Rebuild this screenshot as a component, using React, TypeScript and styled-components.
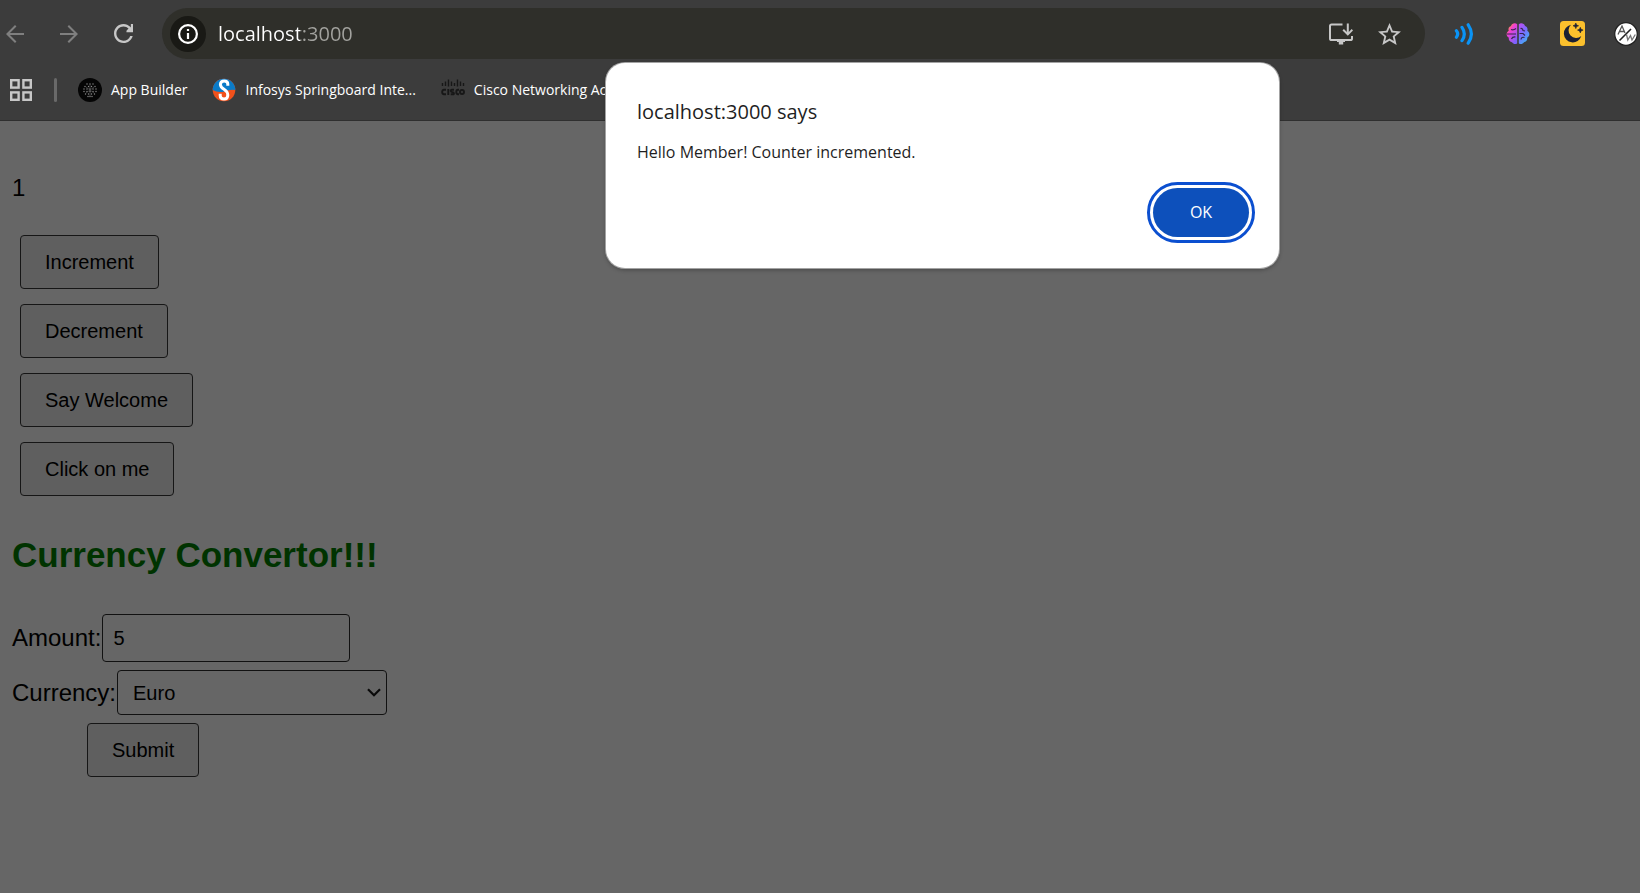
import React, { useState } from "react";
import styled, { createGlobalStyle } from "styled-components";

const uiFont = `"Open Sans", "Noto Sans", sans-serif`;
const pageFont = `"Liberation Sans", Arial, sans-serif`;

const GlobalStyle = createGlobalStyle`
  *, *::before, *::after { box-sizing: border-box; }
  body { margin: 0; background: #666666; }
`;

const Window = styled.div`
  position: relative;
  min-height: 100vh;
  overflow-x: hidden;
  background: #666666;
`;

const BrowserChrome = styled.header`
  background: #3c3c3c;
  border-bottom: 1px solid #2f2f2f;
  padding-top: 8px;
  font-family: ${uiFont};
`;

const Toolbar = styled.div`
  display: flex;
  align-items: center;
  height: 51px;
  padding: 0 2px 0 6px;
`;

const NavGroup = styled.nav`
  display: flex;
  gap: 36px;
  margin-right: 30px;
`;

const IconButton = styled.button<{ $size: number; $tone?: string }>`
  display: flex;
  align-items: center;
  justify-content: center;
  width: ${(p) => p.$size}px;
  height: 24px;
  padding: 0;
  border: 0;
  background: none;
  color: ${(p) => p.$tone ?? "#c7c7c7"};
  svg { display: block; flex: none; }
`;

const AddressBar = styled.form`
  flex: 1;
  min-width: 0;
  display: flex;
  align-items: center;
  height: 51px;
  padding: 0 24px 0 8px;
  border-radius: 26px;
  background: #2f2f2a;
`;

const SiteInfo = styled.button`
  display: flex;
  align-items: center;
  justify-content: center;
  flex: none;
  width: 36px;
  height: 36px;
  padding: 0;
  border: 0;
  border-radius: 50%;
  background: #191915;
  color: #ffffff;
`;

const UrlInput = styled.input`
  flex: 1;
  min-width: 0;
  height: 32px;
  margin-left: 12px;
  padding: 0;
  border: 0;
  outline: 0;
  font: 20px/32px ${uiFont};
  color: transparent;
  background: linear-gradient(to right, #ffffff 82px, #a3a39f 82px);
  background-clip: text;
  -webkit-background-clip: text;
`;

const BarActions = styled.div`
  display: flex;
  gap: 24px;
`;

const Extensions = styled.div`
  display: flex;
  gap: 30px;
  margin-left: 27px;
`;

const BookmarksBar = styled.div`
  display: flex;
  align-items: center;
  height: 61px;
  padding: 0 10px;
`;

const Divider = styled.span`
  width: 3px;
  height: 24px;
  margin: 0 21px 0 22px;
  border-radius: 2px;
  background: #696969;
`;

const Bookmark = styled.a`
  display: flex;
  align-items: center;
  gap: 9px;
  margin-right: 25px;
  color: #ffffff;
  font-size: 14px;
  line-height: 20px;
  text-decoration: none;
  white-space: nowrap;
`;

const Page = styled.main`
  padding: 53px 12px 24px;
  font-family: ${pageFont};
  color: #000000;
`;

const Count = styled.p`
  margin: 0 0 33px;
  font-size: 24px;
  line-height: 28px;
`;

const ButtonStack = styled.div`
  display: flex;
  flex-direction: column;
  align-items: flex-start;
  gap: 15px;
  padding-left: 8px;
`;

const PageButton = styled.button`
  height: 54px;
  padding: 0 24px;
  border: 1px solid #161616;
  border-radius: 4px;
  background: #5f5f5f;
  font: 20px/24px ${pageFont};
  color: #000000;
`;

const Heading = styled.h2`
  margin: 39px 0;
  font-size: 35px;
  line-height: 40px;
  color: #003300;
`;

const ConverterForm = styled.form`
  display: flex;
  flex-direction: column;
  align-items: flex-start;
  gap: 8px;
`;

const Field = styled.div`
  display: flex;
  align-items: center;
  gap: 1px;
`;

const FieldLabel = styled.label`
  font-size: 24px;
  line-height: 28px;
`;

const AmountInput = styled.input`
  width: 248px;
  height: 48px;
  padding: 0 10px;
  border: 1px solid #111111;
  border-radius: 4px;
  background: #666666;
  font: 20px/24px ${pageFont};
  color: #000000;
`;

const SelectWrap = styled.div`
  display: grid;
  align-items: center;
  > * { grid-area: 1 / 1; }
  > svg { justify-self: end; margin-right: 6px; pointer-events: none; }
`;

const CurrencySelect = styled.select`
  appearance: none;
  width: 270px;
  height: 45px;
  padding: 0 15px;
  border: 1px solid #111111;
  border-radius: 4px;
  background: #666666;
  font: 20px/24px ${pageFont};
  color: #000000;
`;

const SubmitRow = styled.div`
  padding-left: 75px;
`;

const Dialog = styled.div`
  position: absolute;
  top: 63px;
  left: 606px;
  width: 673px;
  height: 205px;
  display: flex;
  flex-direction: column;
  padding: 35px 30px 31px 31px;
  border-radius: 19px;
  background: #ffffff;
  box-shadow: 0 0 0 1px #a3a3a3, 0 2px 4px rgba(0, 0, 0, 0.3);
  font-family: ${uiFont};
  color: #1f1f1f;
`;

const DialogTitle = styled.h1`
  margin: 0;
  font-size: 20px;
  font-weight: 500;
  line-height: 28px;
`;

const DialogText = styled.p`
  margin: 14px 0 0;
  font-size: 16px;
  line-height: 24px;
`;

const OkButton = styled.button`
  align-self: flex-end;
  width: 96px;
  height: 49px;
  margin-top: auto;
  padding: 0 0 2px;
  border: 0;
  border-radius: 25px;
  outline: 3px solid #0b4fd0;
  outline-offset: 3px;
  background: #0d50bb;
  font: 500 16px/20px ${uiFont};
  color: #ffffff;
`;

const BackIcon = () => (
  <svg width="18" height="18" viewBox="4 4 16 16" fill="currentColor">
    <path d="M20 11.1H7.5l5.8-5.8L12 4l-8 8 8 8 1.3-1.3-5.8-5.8H20z" />
  </svg>
);

const ForwardIcon = () => (
  <svg width="18" height="18" viewBox="4 4 16 16" fill="currentColor">
    <path d="M4 11.1h12.5l-5.8-5.8L12 4l8 8-8 8-1.3-1.3 5.8-5.8H4z" />
  </svg>
);

const ReloadIcon = () => (
  <svg width="19" height="19" viewBox="4 4 16 16" fill="currentColor">
    <path d="M17.65 6.35C16.2 4.9 14.21 4 12 4c-4.42 0-7.99 3.58-7.99 8s3.57 8 7.99 8c3.73 0 6.84-2.55 7.73-6h-2.08c-.82 2.33-3.04 4-5.65 4-3.31 0-6-2.69-6-6s2.69-6 6-6c1.66 0 3.14.69 4.22 1.78L14.5 9.6V11H20V4h-1.8v2.9z" />
  </svg>
);

const InfoIcon = () => (
  <svg width="20" height="20" viewBox="0 0 20 20" fill="none" stroke="currentColor">
    <circle cx="10" cy="10" r="8.9" strokeWidth="2.2" />
    <path d="M10 9v6M10 5v2" strokeWidth="2.2" />
  </svg>
);

const InstallIcon = () => (
  <svg width="24" height="22" viewBox="0 0 24 22" fill="none" stroke="currentColor" strokeWidth="2">
    <path d="M13.5 1.5H2.6Q1 1.5 1 3.1v12.3Q1 17 2.6 17h18.8q1.6 0 1.6-1.6V13" />
    <path d="M8 16.5h8V19h-1.8v2.5H9.8V19H8z" fill="currentColor" stroke="none" />
    <path d="M18.8.6v10.6M14.2 6.8l4.6 4.6 4.6-4.6" />
  </svg>
);

const StarIcon = () => (
  <svg width="23" height="22" viewBox="2 2 20 19" fill="currentColor">
    <path d="M22 9.24l-7.19-.62L12 2 9.19 8.63 2 9.24l5.46 4.73L5.82 21 12 17.27 18.18 21l-1.63-7.03L22 9.24zM12 15.4l-3.76 2.27 1-4.28-3.32-2.88 4.38-.38L12 6.1l1.71 4.04 4.38.38-3.32 2.88 1 4.28L12 15.4z" />
  </svg>
);

const SoundIcon = () => (
  <svg width="24" height="24" viewBox="0 0 24 24" fill="none" stroke="#0a93f5" strokeWidth="3.2" strokeLinecap="round">
    <path d="M4.4 8.8q2.6 3.2 0 6.4M10 5.4q4.6 6.6 0 13.2M16.2 2.8q6.4 9.200 0 18.400" />
  </svg>
);

const BrainIcon = () => (
  <svg width="24" height="24" viewBox="0 0 24 24">
    <defs>
      <linearGradient id="brainLeft" x1="0" y1="0" x2="0.7" y2="1">
        <stop offset="0.15" stopColor="#ff9d3c" />
        <stop offset="0.4" stopColor="#f43fd0" />
        <stop offset="1" stopColor="#7a63ff" />
      </linearGradient>
      <linearGradient id="brainRight" x1="0" y1="0" x2="0.6" y2="1">
        <stop offset="0" stopColor="#c44af0" />
        <stop offset="0.5" stopColor="#7b6cff" />
        <stop offset="1" stopColor="#3fb0f5" />
      </linearGradient>
    </defs>
    <path d="M11.2 2.2C9 .4 5.6 1.6 5 4 2.8 4.4 2 6.8 2.7 8.7 0 10.4 0 14 2.7 15.5 2.5 18.3 4 20 6 20.3c1.3 2.2 4 2.2 5.2.9z" fill="url(#brainLeft)" />
    <path d="M12.8 2.2C15 .4 18.4 1.600 19 4c2.200.4 3 2.800 2.300 4.700 2.700 1.700 2.700 5.300 0 6.800.2 2.800-1.300 4.500-3.300 4.800-1.300 2.200-4 2.200-5.200.9z" fill="url(#brainRight)" />
    <path d="M1 12h9M5 7.500q2.500 1 5-1M5.500 17q1-2.400 4-2M14.500 6.500q2-.5 2.500 2l2 .5M13.500 11.500h3.500l2 2M15 17.500q.5-3 3.500-2" fill="none" stroke="#35264e" strokeWidth="1.200" />
  </svg>
);

const MoonIcon = () => (
  <svg width="25" height="25" viewBox="0 0 25 25">
    <rect width="25" height="25" rx="3.500" fill="#fbc02d" />
    <path d="M11 3.800A8.900 8.900 0 1 0 21.300 15 7.600 7.600 0 0 1 11 3.800z" fill="#1b2033" />
    <path d="M15.800 2l.8 2 2 .8-2 .8-.8 2-.8-2-2-.8 2-.8zM20.300 6.300l.8 2 2 .8-2 .8-.8 2-.8-2-2-.8 2-.8z" fill="#1b2033" stroke="#1b2033" strokeWidth=".6" />
  </svg>
);

const TranslateIcon = () => (
  <svg width="24" height="24" viewBox="0 0 24 24" fill="none" stroke="#222222" strokeWidth="1.300">
    <circle cx="12" cy="12" r="11.300" fill="#ffffff" />
    <path d="M4 12.500L8 4l3 7M5.500 9.500h4.500" stroke="#555555" />
    <path d="M5.500 18.500L17 7" strokeWidth="1.600" />
    <path d="M12.500 12.500l1.300 5.500 2.700-4.500 1.500 4.500 3.300-5.500" stroke="#777777" />
  </svg>
);

const AppsIcon = () => (
  <svg width="22" height="22" viewBox="0 0 22 22" fill="none" stroke="#c7c7c7" strokeWidth="2.400">
    <rect x="1.200" y="1.200" width="7.400" height="7.400" />
    <rect x="13.400" y="1.200" width="7.400" height="7.400" />
    <rect x="1.200" y="13.400" width="7.400" height="7.400" />
    <rect x="13.400" y="13.400" width="7.400" height="7.400" />
  </svg>
);

const dotRows = [
  { y: 6, xs: [9, 12, 15] },
  { y: 8.5, xs: [7, 10.5, 13.5, 17] },
  { y: 11, xs: [6, 9, 12, 15, 18] },
  { y: 13.5, xs: [6, 9, 12, 15, 18] },
  { y: 16, xs: [7.5, 10.5, 13.5, 16.5] },
  { y: 18.5, xs: [10, 12, 14] },
];

const AppBuilderIcon = () => (
  <svg width="24" height="24" viewBox="0 0 24 24">
    <circle cx="12" cy="12" r="12" fill="#050505" />
    {dotRows.map((row) =>
      row.xs.map((x) => <circle key={`${x}-${row.y}`} cx={x} cy={row.y} r="0.700" fill="#8d8d8d" />)
    )}
    <path d="M12 6v12M8 9l8 6M16 9l-8 6" stroke="#5d5d5d" strokeWidth=".6" />
  </svg>
);

const SpringboardIcon = () => (
  <svg width="24" height="24" viewBox="0 0 24 24">
    <circle cx="12" cy="12" r="11.300" fill="#f1511b" />
    <path d="M.7 12a11.300 11.300 0 0 1 22.600 0q-5-1-11 1.500Q6 15 .7 12z" fill="#0a7bc8" />
    <path d="M15.800 7.800V6q0-3-3.600-3T8.400 6.500q0 2.500 3.600 4.800t3.800 5.700q0 4-3.800 4t-3.800-3.500v-1.700" fill="none" stroke="#ffffff" strokeWidth="3" />
  </svg>
);

const CiscoIcon = () => (
  <svg width="24" height="24" viewBox="0 0 24 24" fill="none" stroke="#171717">
    <path d="M1.500 5v3M4.500 3.500V8M7.500 1.500v7M10.500 3.500V8M13.500 5v3M16.500 1.500v7M19.500 3.500V8M22.500 5v3" strokeWidth="1.400" />
    <path d="M5 11.800H3q-1.800 0-1.800 2.200T3 16.200h2M7.300 11v6M13 11.800h-2q-1.500 0-1.200 1.200t1.600 1.100 1.500 1.200-1.200.9h-2M18 11.800h-1q-1.700 0-1.700 2.200t1.700 2.200h1" strokeWidth="1.900" />
    <circle cx="21" cy="14" r="2" strokeWidth="1.900" />
  </svg>
);

const ChevronIcon = () => (
  <svg width="14" height="9" viewBox="0 0 14 9" fill="none" stroke="#0a0a0a" strokeWidth="2.200">
    <path d="M1 1.200l6 6 6-6" />
  </svg>
);

const stopSubmit = (e: React.FormEvent) => e.preventDefault();

export default function App() {
  const [count, setCount] = useState(1);
  const [amount, setAmount] = useState("5");
  const [currency, setCurrency] = useState("Euro");
  const [url, setUrl] = useState("localhost:3000");
  const [message, setMessage] = useState("Hello Member! Counter incremented.");

  return (
    <Window>
      <GlobalStyle />
      <BrowserChrome>
        <Toolbar>
          <NavGroup>
            <IconButton $size={18} $tone="#7f7f7f" aria-label="Back"><BackIcon /></IconButton>
            <IconButton $size={18} $tone="#7f7f7f" aria-label="Forward"><ForwardIcon /></IconButton>
            <IconButton $size={18} aria-label="Reload"><ReloadIcon /></IconButton>
          </NavGroup>
          <AddressBar onSubmit={stopSubmit}>
            <SiteInfo type="button" aria-label="Site information"><InfoIcon /></SiteInfo>
            <UrlInput aria-label="Address" value={url} onChange={(e) => setUrl(e.target.value)} />
            <BarActions>
              <IconButton type="button" $size={24} aria-label="Install app"><InstallIcon /></IconButton>
              <IconButton type="button" $size={24} aria-label="Bookmark page"><StarIcon /></IconButton>
            </BarActions>
          </AddressBar>
          <Extensions>
            <IconButton $size={24} aria-label="Read aloud"><SoundIcon /></IconButton>
            <IconButton $size={24} aria-label="Assistant"><BrainIcon /></IconButton>
            <IconButton $size={24} aria-label="Night mode"><MoonIcon /></IconButton>
            <IconButton $size={24} aria-label="Translate"><TranslateIcon /></IconButton>
          </Extensions>
        </Toolbar>
        <BookmarksBar>
          <IconButton $size={22} aria-label="Apps"><AppsIcon /></IconButton>
          <Divider />
          <Bookmark href="#app-builder"><AppBuilderIcon />App Builder</Bookmark>
          <Bookmark href="#springboard"><SpringboardIcon />Infosys Springboard Inte...</Bookmark>
          <Bookmark href="#cisco"><CiscoIcon />Cisco Networking Academy</Bookmark>
        </BookmarksBar>
      </BrowserChrome>

      <Page>
        <Count>{count}</Count>
        <ButtonStack>
          <PageButton
            onClick={() => {
              setCount(count + 1);
              setMessage("Hello Member! Counter incremented.");
            }}
          >
            Increment
          </PageButton>
          <PageButton onClick={() => setCount(count - 1)}>Decrement</PageButton>
          <PageButton onClick={() => setMessage("Welcome")}>Say Welcome</PageButton>
          <PageButton onClick={() => setMessage("I was clicked")}>Click on me</PageButton>
        </ButtonStack>
        <Heading>Currency Convertor!!!</Heading>
        <ConverterForm onSubmit={stopSubmit}>
          <Field>
            <FieldLabel htmlFor="amount">Amount:</FieldLabel>
            <AmountInput id="amount" value={amount} onChange={(e) => setAmount(e.target.value)} />
          </Field>
          <Field>
            <FieldLabel htmlFor="currency">Currency:</FieldLabel>
            <SelectWrap>
              <CurrencySelect id="currency" value={currency} onChange={(e) => setCurrency(e.target.value)}>
                <option>Euro</option>
              </CurrencySelect>
              <ChevronIcon />
            </SelectWrap>
          </Field>
          <SubmitRow>
            <PageButton type="submit">Submit</PageButton>
          </SubmitRow>
        </ConverterForm>
      </Page>

      {message && (
        <Dialog role="alertdialog" aria-labelledby="dialog-title" aria-describedby="dialog-text">
          <DialogTitle id="dialog-title">localhost:3000 says</DialogTitle>
          <DialogText id="dialog-text">{message}</DialogText>
          <OkButton onClick={() => setMessage("")}>OK</OkButton>
        </Dialog>
      )}
    </Window>
  );
}
